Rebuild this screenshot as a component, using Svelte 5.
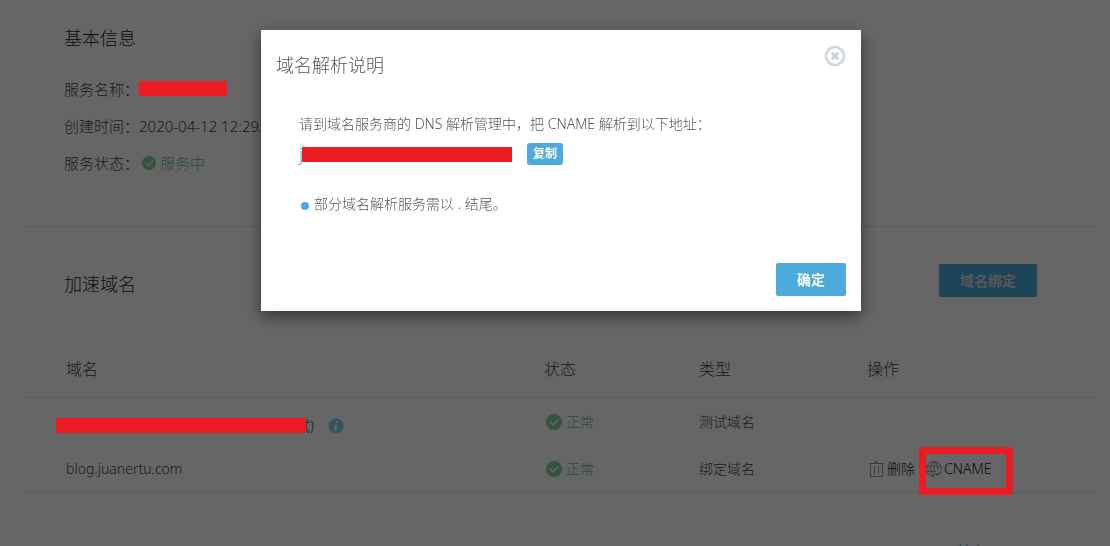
<script>
  const rows = [
    { masked: true, domain: '试)', type: '测试域名', actions: false },
    { masked: false, domain: 'blog.juanertu.com', type: '绑定域名', actions: true }
  ];
</script>

{#snippet check(size)}
  <svg class="check" width={size} height={size} viewBox="0 0 16 16" aria-hidden="true">
    <circle cx="8" cy="8" r="8" fill="#7fd0a0" />
    <path d="M3.6 7.6 L7 11 L12.6 5.2" fill="none" stroke="#fff" stroke-width="1.3" />
  </svg>
{/snippet}

<main>
  <section class="info">
    <h2>基本信息</h2>
    <dl>
      <div><dt>服务名称：</dt><dd><span class="mask name"></span></dd></div>
      <div><dt>创建时间：</dt><dd>2020-04-12 12:29:36</dd></div>
      <div><dt>服务状态：</dt><dd class="ok state">{@render check(14)}服务中</dd></div>
    </dl>
  </section>

  <section class="domains">
    <header>
      <h2>加速域名</h2>
      <button class="btn bind">域名绑定</button>
    </header>
    <table>
      <thead>
        <tr><th class="c1">域名</th><th class="c2">状态</th><th class="c3">类型</th><th>操作</th></tr>
      </thead>
      <tbody>
        {#each rows as row}
          <tr>
            <td>
              {#if row.masked}
                <span class="line test"><span class="mask domain"></span>{row.domain}
                  <svg class="tip" width="16" height="16" viewBox="0 0 16 16" aria-hidden="true">
                    <circle cx="8" cy="8" r="7.5" fill="#80cbea" />
                    <circle cx="9.2" cy="4" r="1.2" fill="#fff" />
                    <path d="M6.2 6.7 H9.5 L8.2 11.4 L9.5 11.2 L9.2 12.2 Q6 13.6 6.2 11.4 L7.2 7.6 L6 7.6Z" fill="#fff" />
                  </svg>
                </span>
              {:else}{row.domain}{/if}
            </td>
            <td><span class="line ok">{@render check(16)}正常</span></td>
            <td>{row.type}</td>
            <td>
              {#if row.actions}
                <span class="line">
                  <button class="act">
                    <svg width="16" height="16" viewBox="0 0 16 16" fill="none" stroke="#999" aria-hidden="true">
                      <path d="M0 2.5H15M6.5 2.5V.5H8.5V2.5M1.5 2.5V15.5H13.5V2.5M5.5 5V13M9.5 5V13" />
                    </svg>删除</button>
                  <button class="act cname">
                    <svg width="16" height="16" viewBox="0 0 16 16" fill="none" stroke="#999" aria-hidden="true">
                      <path d="M9 15.3A7.4 7.4 0 1 1 15.2 9M1 5.2H15M.8 10.3H10M8 .6V15.4M7 .7Q1.5 8 7 15.2M9 .7Q12.5 4.5 12 9" />
                      <path d="M9.5 12L11.7 14.3L15.5 10.3" stroke-width="1.4" />
                    </svg>CNAME</button>
                </span>
              {/if}
            </td>
          </tr>
        {/each}
      </tbody>
    </table>
  </section>
  <footer><a href="#help">Help</a></footer>
</main>

<div class="overlay">
  <div class="dialog" role="dialog" aria-labelledby="dialog-title">
    <header>
      <h3 id="dialog-title">域名解析说明</h3>
      <button class="close" aria-label="关闭">
        <svg width="22" height="22" viewBox="0 0 22 22" fill="none" stroke="#cdd4da" aria-hidden="true">
          <circle cx="11" cy="11" r="9" stroke-width="2.6" />
          <path d="M7.7 7.7L14.3 14.3M14.3 7.7L7.7 14.3" stroke-width="3" />
        </svg>
      </button>
    </header>
    <div class="body">
      <p>请到域名服务商的 DNS 解析管理中，把 CNAME 解析到以下地址：</p>
      <div class="address">
        <span class="host">j<span class="mask target"></span></span>
        <button class="btn copy">复制</button>
      </div>
      <ul><li>部分域名解析服务需以 . 结尾。</li></ul>
    </div>
    <div class="foot"><button class="btn confirm">确定</button></div>
  </div>
</div>

<style>
  :global(body) {
    margin: 0;
    background: #fff;
    overflow: hidden;
    font-family: 'Noto Sans', 'Noto Sans CJK SC', sans-serif;
    font-weight: 300;
    font-size: 14px;
    line-height: 20px;
    color: #444;
  }
  h2, h3, p, dl, dd, ul { margin: 0; padding: 0; font-weight: inherit; }
  button { font: inherit; color: inherit; border: 0; padding: 0; background: none; }
  main { padding: 0 14px 0 25px; height: 100vh; overflow: hidden; box-sizing: border-box; }
  h2 { font-size: 18px; line-height: 24px; color: #222; }
  .info { padding: 26px 39px 45px; border-bottom: 1px solid #e5e5e5; }
  dl { margin-top: 20px; font-size: 15px; }
  dl div { display: flex; align-items: center; height: 37px; }
  dd { display: flex; align-items: center; }
  .mask { position: relative; z-index: 2; background: #ed1c24; height: 15px; display: inline-block; }
  .name { width: 88px; }
  .state { padding-left: 3px; }
  .ok { color: #6cc08e; }
  .check { margin-right: 4px; }
  .domains header { display: flex; justify-content: space-between; align-items: center; padding: 37px 59px 36px 39px; }
  .domains h2 { padding-top: 6px; }
  .btn { background: #4caadc; color: #fff; font-weight: 700; border-radius: 2px; }
  .bind { width: 98px; height: 33px; color: #ddd; }
  table { width: 100%; border-collapse: collapse; table-layout: fixed; border-bottom: 1px solid #e5e5e5; }
  th { font-size: 16px; font-weight: inherit; text-align: left; height: 56px; padding: 8px 0 0; border-bottom: 1px solid #e5e5e5; }
  td { padding: 0; height: 47px; }
  th:first-child, td:first-child { padding-left: 41px; }
  .c1 { width: 478px; }
  .c2 { width: 155px; }
  .c3 { width: 168px; }
  .line { display: flex; align-items: center; }
  .line.ok { padding-left: 2px; }
  .test { margin-left: -10px; padding-top: 8px; }
  .domain { width: 250px; margin-right: -10px; }
  .tip { margin-left: 14px; }
  .act { display: flex; align-items: center; gap: 2px; color: #222; padding-left: 2px; }
  .cname { position: relative; margin-left: 9px; }
  .cname::after { content: ''; position: absolute; z-index: 2; inset: -12px -22px -16px -5px; border: 7px solid #ed1c24; border-radius: 4px; }
  footer { padding: 47px 108px 0 0; text-align: right; }
  footer a { color: #4caadc; text-decoration: none; }
  .overlay { position: fixed; inset: 0; z-index: 1; display: flex; justify-content: center; align-items: flex-start; padding: 30px 0 0 12px; background: rgba(0, 0, 0, 0.6); }
  .dialog { width: 600px; background: #fff; box-shadow: 0 5px 15px rgba(0, 0, 0, 0.5); color: #555; }
  .dialog header { display: flex; justify-content: space-between; align-items: flex-start; padding: 15px 15px 0; }
  h3 { font-size: 18px; line-height: 40px; }
  .close, .close svg { display: block; }
  .body { padding: 29px 38px 0; }
  .address { display: flex; align-items: center; height: 40px; }
  .host { display: flex; align-items: center; width: 228px; font-size: 18px; color: #4caadc; }
  .target { width: 210px; margin-left: -1px; }
  .copy { width: 36px; height: 22px; font-size: 12px; border-radius: 3px; }
  ul { list-style: none; padding-top: 20px; }
  li { display: flex; align-items: center; }
  li::before { content: ''; width: 8px; height: 8px; margin: 3px 5px 0 2px; border-radius: 50%; background: #4caadc; }
  .foot { display: flex; justify-content: flex-end; padding: 49px 15px 15px; }
  .confirm { width: 70px; height: 33px; }
</style>
